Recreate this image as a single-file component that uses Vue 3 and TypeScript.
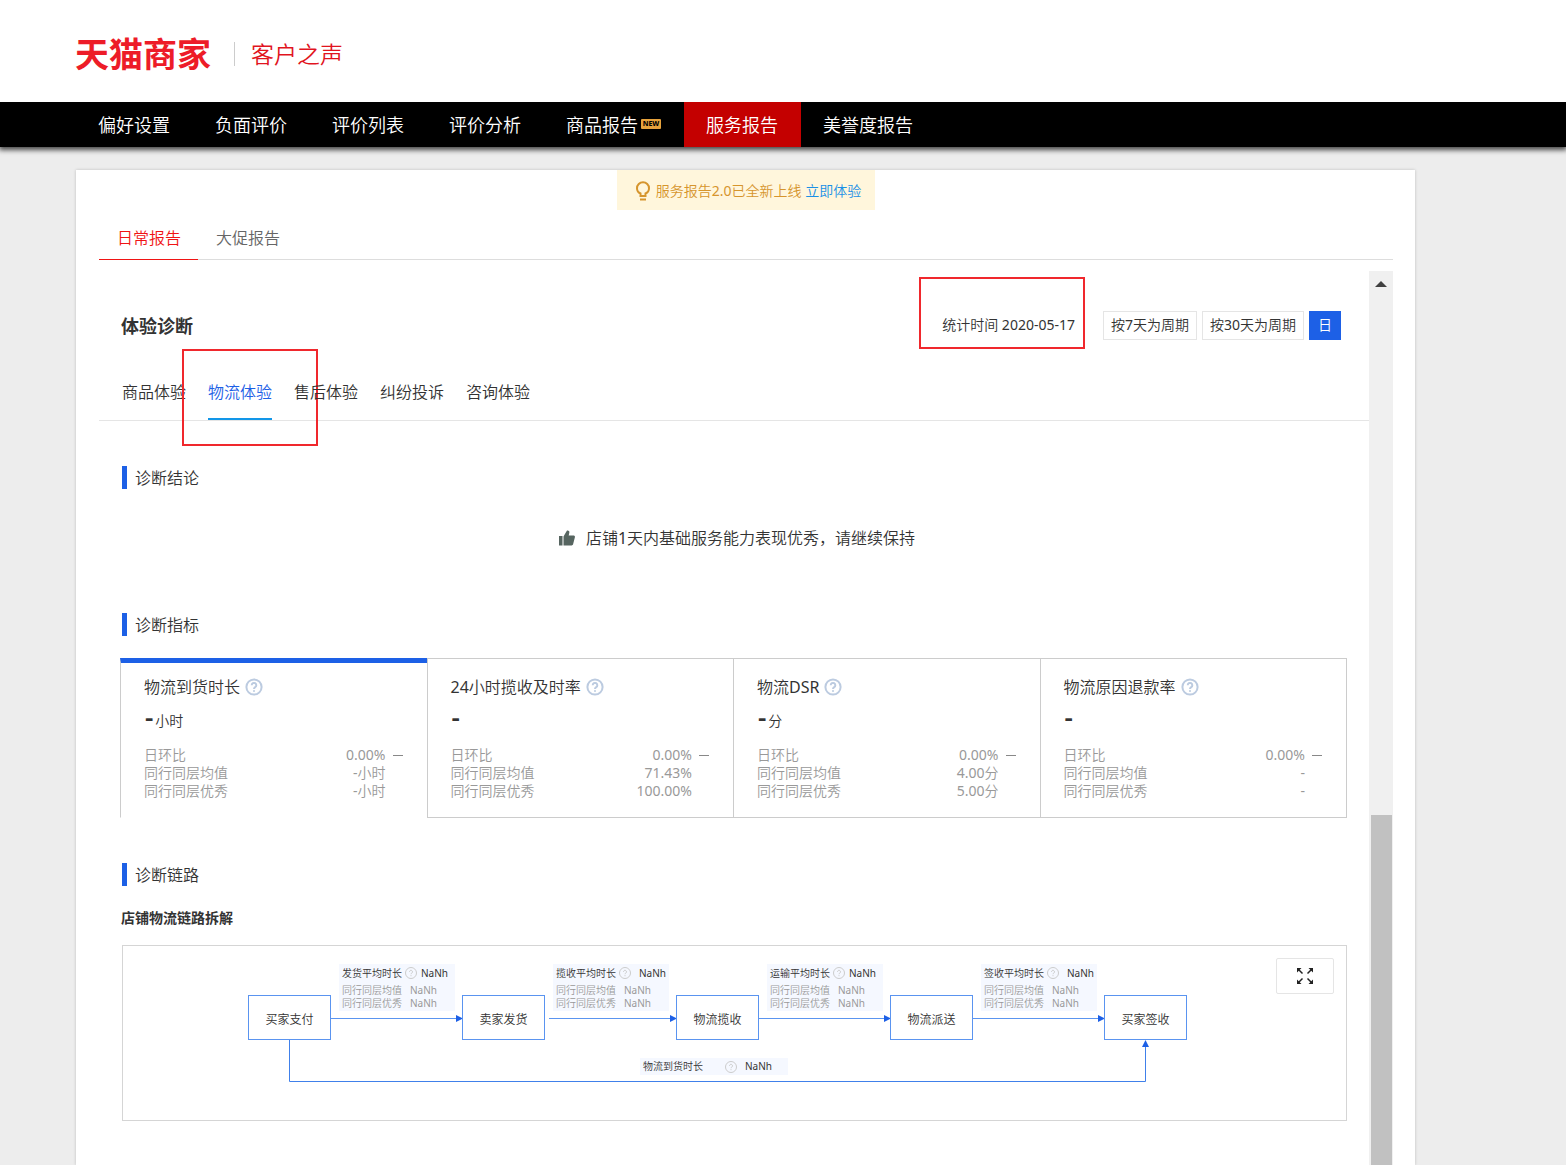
<script setup lang="ts">
interface NavItem {
  label: string
  badge?: string
  active?: boolean
}

interface Metric {
  title: string
  unit: string
  active?: boolean
  rows: { label: string; value: string; flat?: boolean }[]
}

interface Stage {
  title: string
  wide: boolean
}

const navItems: NavItem[] = [
  { label: '偏好设置' },
  { label: '负面评价' },
  { label: '评价列表' },
  { label: '评价分析' },
  { label: '商品报告', badge: 'NEW' },
  { label: '服务报告', active: true },
  { label: '美誉度报告' },
]

const reportTabs = ['日常报告', '大促报告']
const experienceTabs = ['商品体验', '物流体验', '售后体验', '纠纷投诉', '咨询体验']
const periods = ['按7天为周期', '按30天为周期', '日']

function metric(title: string, unit: string, average: string, best: string, active = false): Metric {
  return {
    title,
    unit,
    active,
    rows: [
      { label: '日环比', value: '0.00%', flat: true },
      { label: '同行同层均值', value: average },
      { label: '同行同层优秀', value: best },
    ],
  }
}

const metrics: Metric[] = [
  metric('物流到货时长', '小时', '-小时', '-小时', true),
  metric('24小时揽收及时率', '', '71.43%', '100.00%'),
  metric('物流DSR', '分', '4.00分', '5.00分'),
  metric('物流原因退款率', '', '-', '-'),
]

const step = 214
const nodes = ['买家支付', '卖家发货', '物流揽收', '物流派送', '买家签收']
const stages: Stage[] = [
  { title: '发货平均时长', wide: false },
  { title: '揽收平均时长', wide: true },
  { title: '运输平均时长', wide: false },
  { title: '签收平均时长', wide: true },
]
</script>

<template>
  <div class="page" lang="zh-CN">
    <header class="brand">
      <a class="logo" href="#">天猫商家</a>
      <span class="product">客户之声</span>
    </header>

    <nav class="main-nav">
      <a v-for="item in navItems" :key="item.label" href="#" class="nav-link" :class="{ active: item.active }">
        {{ item.label }}<span v-if="item.badge" class="badge">{{ item.badge }}</span>
      </a>
    </nav>

    <main class="sheet">
      <p class="notice">
        <svg class="bulb" viewBox="0 0 16 20" aria-hidden="true">
          <path d="M5.500 15v-2.500C3.300 11.500 2 9.600 2 7.200a6 6 0 0 1 12 0c0 2.400-1.300 4.300-3.500 5.300V15z" />
          <path d="M5 18.500h6" />
        </svg>
        <span>服务报告2.0已全新上线 <a href="#">立即体验</a></span>
      </p>

      <nav class="report-tabs">
        <a v-for="(tab, i) in reportTabs" :key="tab" href="#" :class="{ active: i === 0 }">{{ tab }}</a>
      </nav>

      <div class="viewport">
        <div class="content">
          <div class="head">
            <h1>体验诊断</h1>
            <span class="date">统计时间 2020-05-17<i class="mark date-mark"></i></span>
            <div class="periods">
              <button v-for="(p, i) in periods" :key="p" type="button" :class="{ active: i === 2 }">{{ p }}</button>
            </div>
          </div>

          <nav class="sub-tabs">
            <a v-for="(tab, i) in experienceTabs" :key="tab" href="#" :class="{ active: i === 1 }">
              {{ tab }}<i v-if="i === 1" class="mark tab-mark"></i>
            </a>
          </nav>

          <h2>诊断结论</h2>
          <p class="verdict">
            <svg viewBox="0 0 16 16" aria-hidden="true">
              <path d="M0 6h3.500v9.500H0zM4.500 6.500L8 0.500c1.800-.4 2.700.8 2.300 2.300L9.700 5.500h4.800c1 0 1.700.8 1.400 1.800l-1.800 7c-.2.700-.8 1.200-1.500 1.200H4.500z" />
            </svg>
            <span>店铺1天内基础服务能力表现优秀，请继续保持</span>
          </p>

          <h2>诊断指标</h2>
          <div class="metrics">
            <section v-for="m in metrics" :key="m.title" class="metric" :class="{ active: m.active }">
              <h3>
                {{ m.title }}
                <svg class="help" viewBox="0 0 18 18" aria-hidden="true">
                  <circle cx="9" cy="9" r="7.600" />
                  <path d="M6.700 7.200a2.300 2.300 0 1 1 3.500 2c-.8.500-1.200.8-1.200 1.700M9 12.200v1.500" />
                </svg>
              </h3>
              <p class="value"><strong>-</strong><span>{{ m.unit }}</span></p>
              <dl>
                <div v-for="row in m.rows" :key="row.label">
                  <dt>{{ row.label }}</dt>
                  <dd>{{ row.value }}</dd>
                  <span class="trend" :class="{ flat: row.flat }"></span>
                </div>
              </dl>
            </section>
          </div>

          <h2>诊断链路</h2>
          <h4>店铺物流链路拆解</h4>
          <div class="chart">
            <div class="canvas">
              <svg class="edges" viewBox="0 0 940 174" aria-hidden="true">
                <g v-for="(s, i) in stages" :key="s.title">
                  <path class="edge light" :d="`M${i * step + (i === 1 ? 87 : 83)} 72.500H${i * step + 209}`" />
                  <path class="tip" :d="`M${i * step + 208} 69l7 3.500l-7 3.500z`" />
                </g>
                <path class="edge" d="M41.500 94V135.500H897.500V100" />
                <path class="tip" d="M894 101l3.500-7l3.500 7z" />
              </svg>
              <div v-for="(n, i) in nodes" :key="n" class="node" :style="{ left: i * step + 'px' }">{{ n }}</div>
              <div
                v-for="(s, i) in stages"
                :key="s.title"
                class="stage"
                :class="{ wide: s.wide }"
                :style="{ left: i * step + 91 + 'px' }"
              >
                <div class="line main">
                  <span>{{ s.title }}</span>
                  <svg class="help faint" viewBox="0 0 12 12" aria-hidden="true">
                    <circle cx="6" cy="6" r="5.500" />
                    <path d="M4.500 4.800a1.500 1.500 0 1 1 2.300 1.300c-.5.300-.8.500-.8 1.100M6 8.200v1" />
                  </svg>
                  <span>NaNh</span>
                </div>
                <div class="line"><span>同行同层均值</span><span>NaNh</span></div>
                <div class="line"><span>同行同层优秀</span><span>NaNh</span></div>
              </div>
              <div class="total">
                <span>物流到货时长</span>
                <svg class="help faint" viewBox="0 0 12 12" aria-hidden="true">
                  <circle cx="6" cy="6" r="5.500" />
                  <path d="M4.500 4.800a1.500 1.500 0 1 1 2.300 1.300c-.5.300-.8.500-.8 1.100M6 8.200v1" />
                </svg>
                <span>NaNh</span>
              </div>
            </div>
            <button type="button" class="expand" aria-label="全屏">
              <svg viewBox="0 0 18 18" aria-hidden="true">
                <path d="M2.500 2.500L6.500 6.500M15.500 2.500L11.500 6.500M2.500 15.500L6.500 11.500M15.500 15.500L11.500 11.500" />
                <path class="fill" d="M1 1h4.500L1 5.500zM17 1h-4.500l4.500 4.500zM1 17h4.500L1 12.500zM17 17h-4.500l4.500-4.500z" />
              </svg>
            </button>
          </div>
        </div>

        <div class="scrollbar">
          <button type="button" aria-label="向上滚动"><svg viewBox="0 0 12 6" aria-hidden="true"><path d="M0 6L6 0l6 6z" /></svg></button>
          <div class="gap"></div>
          <div class="thumb"></div>
        </div>
      </div>
    </main>
  </div>
</template>

<style>
body {
  margin: 0;
  background: #ededed;
}
</style>

<style scoped>
.page {
  display: flex;
  flex-direction: column;
  min-height: 100vh;
  font-family: "Noto Sans", "Noto Sans CJK SC DemiLight", "Noto Sans CJK SC", sans-serif;
  font-size: 14px;
  line-height: 20px;
  color: #333;
}
h1, h2, h3, h4, p, dl, dd {
  margin: 0;
}
a {
  color: inherit;
  text-decoration: none;
}
button {
  box-sizing: border-box;
  margin: 0;
  font: inherit;
  color: inherit;
}
svg {
  display: block;
  flex: none;
}
.logo, h1, h4 {
  font-family: "Noto Sans", "Noto Sans CJK SC", sans-serif;
}

.brand {
  position: relative;
  z-index: 1;
  display: flex;
  align-items: center;
  height: 102px;
  padding: 5px 75px 0;
  box-sizing: border-box;
  background: #fff;
}
.logo {
  margin-right: 23px;
  font-size: 34px;
  line-height: 40px;
  font-weight: 700;
  color: #ed1c28;
}
.product {
  padding-left: 16px;
  border-left: 1px solid #ccc;
  font-size: 23px;
  line-height: 24px;
  color: #e1141e;
}

.main-nav {
  position: relative;
  display: flex;
  padding-left: 76px;
  background: #000;
  box-shadow: 0 2px 5px 1px rgba(0, 0, 0, 0.7);
}
.nav-link {
  display: flex;
  align-items: center;
  height: 45px;
  padding: 0 23px 0 22px;
  font-size: 18px;
  color: #fff;
}
.nav-link.active {
  background: #c40000;
}
.badge {
  margin: 0 0 2px 3px;
  width: 20px;
  border-radius: 1px;
  background: #e6a23c;
  font-size: 7px;
  line-height: 10px;
  font-weight: 800;
  text-align: center;
  color: #000;
}

.sheet {
  display: flex;
  flex-direction: column;
  flex: 1;
  margin: 23px 151px 0 76px;
  padding: 0 22px 0 23px;
  background: #fff;
  box-shadow: 0 0 3px rgba(0, 0, 0, 0.2);
}
.notice {
  display: flex;
  align-items: center;
  align-self: center;
  box-sizing: border-box;
  height: 40px;
  padding: 1px 14px 0 18px;
  background: #fff6dc;
  color: #d6952d;
}
.notice a {
  color: #1a90e6;
}
.bulb {
  width: 16px;
  height: 20px;
  margin-right: 5px;
  fill: none;
  stroke: #d6952d;
  stroke-width: 2;
}
.report-tabs {
  display: flex;
  margin-top: 6px;
  border-bottom: 1px solid #ddd;
  font-size: 16px;
  color: #666;
}
.report-tabs a {
  padding: 2px 17px 0 18px;
  margin-bottom: -1px;
  border-bottom: 1px solid transparent;
  line-height: 41px;
}
.report-tabs .active {
  border-color: #f01414;
  color: #f01414;
}

.viewport {
  display: flex;
  flex: 1;
  margin-top: 11px;
}
.content {
  flex: 1;
  min-width: 0;
  padding: 40px 0 44px;
}
.head {
  display: flex;
  align-items: center;
  height: 29px;
  padding: 0 28px 0 22px;
}
h1 {
  margin-right: auto;
  font-size: 18px;
}
.date {
  position: relative;
  margin-right: 28px;
  padding-bottom: 2px;
}
.periods {
  display: flex;
  gap: 5px;
}
.periods button {
  min-width: 32px;
  height: 29px;
  padding: 0 7px 2px;
  border: 1px solid #e5e5e5;
  background: #fff;
}
.periods .active {
  border-color: #1d60e6;
  background: #1d60e6;
  color: #fff;
}
.mark {
  position: absolute;
  border: 2px solid #f0282d;
  pointer-events: none;
}
.date-mark {
  inset: -38px -10px -12px -23px;
}
.sub-tabs {
  display: flex;
  gap: 22px;
  margin-top: 26px;
  padding-left: 23px;
  border-bottom: 1px solid #e5e5e5;
  font-size: 16px;
  line-height: 52px;
}
.sub-tabs a {
  position: relative;
  border-bottom: 2px solid transparent;
}
.sub-tabs .active {
  border-color: #1296e8;
  color: #1d60e6;
}
.tab-mark {
  inset: -17px -46px -28px -26px;
}

h2 {
  margin: 45px 0 0 23px;
  padding: 2px 0 0 8px;
  border-left: 5px solid #1d60e6;
  font-size: 16px;
  line-height: 21px;
  font-weight: 400;
}
.verdict {
  display: flex;
  justify-content: center;
  align-items: center;
  gap: 11px;
  margin: 37px 0 63px;
  padding-left: 6px;
  font-size: 16px;
  line-height: 24px;
}
.verdict + h2 {
  margin-top: 0;
}
.verdict svg {
  width: 16px;
  height: 16px;
  fill: #566560;
}

.metrics {
  display: grid;
  grid-template-columns: repeat(4, 1fr);
  margin: 22px 22px 0 21px;
  border-right: 1px solid #ccc;
}
.metric {
  padding: 16px 24px 17px 23px;
  border: 1px solid #ccc;
  border-right: 0;
}
.metric.active {
  padding-top: 12px;
  border-top: 5px solid #1d60e6;
  border-bottom-color: transparent;
}
.metric h3 {
  display: flex;
  align-items: center;
  gap: 5px;
  font-size: 16px;
  line-height: 24px;
  font-weight: 400;
}
.help {
  width: 18px;
  height: 18px;
  fill: none;
  stroke: #bccbe0;
  stroke-width: 2;
}
.help.faint {
  width: 12px;
  height: 12px;
  stroke: #ccc;
  stroke-width: 1;
}
.value {
  display: flex;
  align-items: baseline;
  gap: 2px;
  height: 24px;
  margin-top: 8px;
  line-height: 18px;
}
.value strong {
  padding-left: 1px;
  font-size: 26px;
  font-weight: 600;
}
.metric dl {
  margin-top: 15px;
  line-height: 18px;
  color: #999;
}
.metric dl div {
  display: flex;
  align-items: center;
}
.metric dd {
  margin-left: auto;
}
.trend {
  width: 10px;
  height: 1px;
  margin-left: 7px;
}
.trend.flat {
  background: #888;
}

h4 {
  margin: 22px 0 0 22px;
  font-size: 14px;
}
.chart {
  position: relative;
  margin: 17px 22px 0 23px;
  padding-left: 125px;
  border: 1px solid #d5d5d5;
}
.canvas {
  position: relative;
  height: 174px;
}
.edges {
  width: 940px;
  height: 174px;
}
.edge {
  fill: none;
  stroke: #4080ea;
}
.edge.light {
  stroke: #5a94f0;
}
.tip {
  fill: #1d60e6;
}
.node {
  position: absolute;
  top: 49px;
  box-sizing: border-box;
  width: 83px;
  height: 45px;
  border: 1px solid #5a94f0;
  background: #fff;
  font-size: 12px;
  line-height: 47px;
  text-align: center;
}
.stage {
  position: absolute;
  top: 18px;
  box-sizing: border-box;
  width: 116px;
  padding: 1px 0 1px 3px;
  background: #f5f8ff;
  font-size: 10px;
  line-height: 13px;
  color: #999;
}
.line {
  display: flex;
  align-items: center;
  gap: 8px;
}
.line.main {
  gap: 3px;
  line-height: 16px;
  margin-bottom: 3px;
  color: #333;
}
.line.main span:last-child {
  margin-left: 1px;
}
.line.main span:first-child {
  flex: none;
}
.wide .line.main span:last-child {
  margin-left: 5px;
}
.total {
  position: absolute;
  top: 112px;
  left: 392px;
  display: flex;
  align-items: center;
  box-sizing: border-box;
  width: 148px;
  padding-left: 3px;
  background: #f5f8ff;
  font-size: 10px;
  line-height: 17px;
}
.total svg {
  margin: 0 8px 0 22px;
}
.expand {
  position: absolute;
  top: 12px;
  right: 12px;
  display: flex;
  align-items: center;
  justify-content: center;
  width: 58px;
  height: 36px;
  padding: 0;
  border: 1px solid #e5e5e5;
  border-radius: 2px;
  background: #fff;
}
.expand svg {
  width: 18px;
  height: 18px;
  fill: none;
  stroke: #222;
  stroke-width: 1.5;
}
.expand .fill {
  fill: #222;
  stroke: none;
}

.scrollbar {
  display: flex;
  flex-direction: column;
  width: 24px;
  background: #f0f0f0;
}
.scrollbar button {
  display: flex;
  align-items: center;
  justify-content: center;
  height: 24px;
  padding: 2px 0 0;
  border: 0;
  background: none;
}
.scrollbar svg {
  width: 12px;
  height: 6px;
  fill: #404040;
}
.scrollbar .gap {
  flex: 520;
}
.thumb {
  flex: 350;
  margin: 0 1px 0 2px;
  background: #c1c1c1;
}
</style>
